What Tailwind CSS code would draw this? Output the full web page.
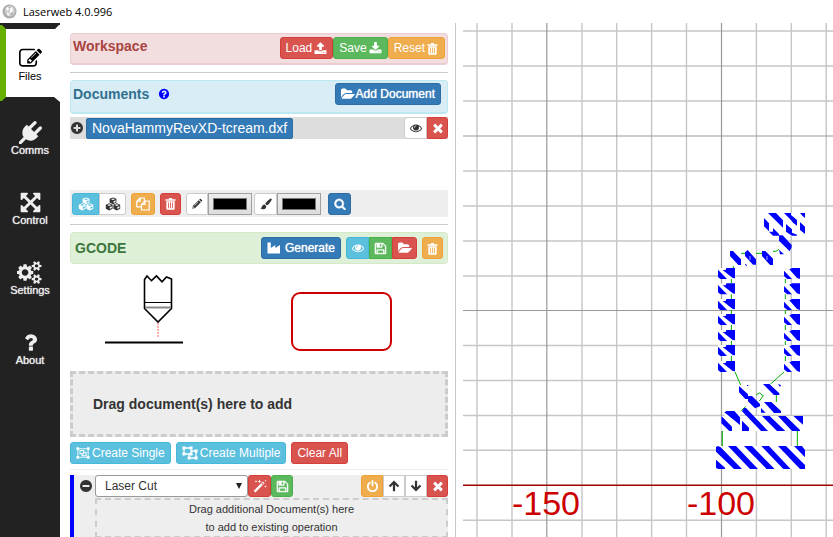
<!DOCTYPE html>
<html lang="en">
<head>
<meta charset="utf-8">
<meta name="viewport" content="width=device-width, initial-scale=1">
<title>Laserweb 4.0.996</title>
<script src="https://cdn.jsdelivr.net/npm/@tailwindcss/browser@4"></script>
</head>
<body class="flex h-screen flex-col overflow-hidden bg-white font-['Liberation_Sans',Arial,sans-serif] text-xs text-[#333]">

<svg class="hidden" aria-hidden="true">
  <symbol id="edit" viewBox="0 0 1792 1792"><path d="M888 1184l116-116-152-152-116 116v56h96v96h56zm440-720q-16-16-33 1l-350 350q-17 17-1 33t33-1l350-350q17-17 1-33zm80 594v190q0 119-84.5 203.5t-203.5 84.5h-832q-119 0-203.5-84.5t-84.5-203.5v-832q0-119 84.5-203.5t203.5-84.5h832q63 0 117 25 15 7 18 23 3 17-9 29l-49 49q-14 14-32 8-23-6-45-6h-832q-66 0-113 47t-47 113v832q0 66 47 113t113 47h832q66 0 113-47t47-113v-126q0-13 9-22l64-64q15-15 35-7t20 29zm-96-738l288 288-672 672h-288v-288zm444 132l-92 92-288-288 92-92q28-28 68-28t68 28l152 152q28 28 28 68t-28 68z"/></symbol>
  <symbol id="plug" viewBox="0 0 1792 1792"><path d="M1755 453q37 38 37 90.5t-37 90.5l-401 400 150 150-160 160q-163 163-389.5 186.5t-411.5-100.5l-362 362h-181v-181l362-362q-124-185-100.5-411.5t186.5-389.5l160-160 150 150 400-401q38-37 91-37t90 37 37 90.5-37 90.5l-400 401 234 234 401-400q38-37 91-37t90 37z"/></symbol>
  <symbol id="arrows" viewBox="0 0 1792 1792"><path d="M1411 541l-355 355 355 355 144-144q29-31 70-14 39 17 39 59v448q0 26-19 45t-45 19h-448q-42 0-59-40-17-39 14-69l144-144-355-355-355 355 144 144q31 30 14 69-17 40-59 40h-448q-26 0-45-19t-19-45v-448q0-42 40-59 39-17 69 14l144 144 355-355-355-355-144 144q-19 19-45 19-12 0-24-5-40-17-40-59v-448q0-26 19-45t45-19h448q42 0 59 40 17 39-14 69l-144 144 355 355 355-355-144-144q-31-30-14-69 17-40 59-40h448q26 0 45 19t19 45v448q0 42-39 59-13 5-25 5-26 0-45-19z"/></symbol>
  <symbol id="cogs" viewBox="0 0 1920 1792"><path d="M832 896q0-106-75-181t-181-75-181 75-75 181 75 181 181 75 181-75 75-181zm768 512q0-52-38-90t-90-38-90 38-38 90q0 53 37.5 90.5t90.5 37.5 90.5-37.5 37.5-90.5zm0-1024q0-52-38-90t-90-38-90 38-38 90q0 53 37.5 90.5t90.5 37.5 90.5-37.5 37.5-90.5zm-384 421v185q0 10-7 19.5t-16 10.5l-155 24q-11 35-32 76 34 48 90 115 7 11 7 20 0 12-7 19-23 30-82.5 89.5t-78.5 59.5q-11 0-21-7l-115-90q-37 19-77 31-11 108-23 155-7 24-30 24h-186q-11 0-20-7.5t-10-17.5l-23-153q-34-10-75-31l-118 89q-7 7-20 7-11 0-21-8-144-133-144-160 0-9 7-19 10-14 41-53t47-61q-23-44-35-82l-152-24q-10-1-17-9.500t-7-19.500v-185q0-10 7-19.500t16-10.500l155-24q11-35 32-76-34-48-90-115-7-11-7-20 0-12 7-20 22-30 82-89t79-59q11 0 21 7l115 90q34-18 77-32 11-108 23-154 7-24 30-24h186q11 0 20 7.500t10 17.500l23 153q34 10 75 31l118-89q8-7 20-7 11 0 21 8 144 133 144 160 0 8-7 19-12 16-42 54t-45 60q23 48 34 82l152 23q10 2 17 10.500t7 19.500zm640 533v140q0 16-149 31-12 27-30 52 51 113 51 138 0 4-4 7-122 71-124 71-8 0-46-47t-52-68q-20 2-30 2t-30-2q-14 21-52 68t-46 47q-2 0-124-71-4-3-4-7 0-25 51-138-18-25-30-52-149-15-149-31v-140q0-16 149-31 13-29 30-52-51-113-51-138 0-4 4-7 4-2 35-20t59-34 30-16q8 0 46 46.500t52 67.500q20-2 30-2t30 2q51-71 92-112l6-2q4 0 124 70 4 3 4 7 0 25-51 138 17 23 30 52 149 15 149 31zm0-1024v140q0 16-149 31-12 27-30 52 51 113 51 138 0 4-4 7-122 71-124 71-8 0-46-47t-52-68q-20 2-30 2t-30-2q-14 21-52 68t-46 47q-2 0-124-71-4-3-4-7 0-25 51-138-18-25-30-52-149-15-149-31v-140q0-16 149-31 13-29 30-52-51-113-51-138 0-4 4-7 4-2 35-20t59-34 30-16q8 0 46 46.500t52 67.500q20-2 30-2t30 2q51-71 92-112l6-2q4 0 124 70 4 3 4 7 0 25-51 138 17 23 30 52 149 15 149 31z"/></symbol>
  <symbol id="question" viewBox="0 0 1792 1792"><path d="M1088 1256v240q0 16-12 28t-28 12h-240q-16 0-28-12t-12-28v-240q0-16 12-28t28-12h240q16 0 28 12t12 28zm316-600q0 54-15.500 101t-35 76.500-55 59.500-57.500 43.500-61 35.500q-41 23-68.500 65t-27.500 67q0 17-12 32.500t-28 15.500h-240q-15 0-25.500-18.500t-10.500-37.500v-45q0-83 65-156.500t143-108.500q59-27 84-56t25-76q0-42-46.500-74t-107.500-32q-65 0-108 29-35 25-107 115-13 16-31 16-12 0-25-8l-164-125q-13-10-15.500-25t5.500-28q160-266 464-266 80 0 161 31t146 83 106 127.500 41 158.500z"/></symbol>
  <symbol id="help" viewBox="0 0 1792 1792"><path d="M1024 1376v-192q0-14-9-23t-23-9h-192q-14 0-23 9t-9 23v192q0 14 9 23t23 9h192q14 0 23-9t9-23zm256-672q0-88-55.500-163t-138.500-116-170-41q-243 0-371 213-15 24 8 42l132 100q7 6 19 6 16 0 25-12 53-68 86-92 34-24 86-24 48 0 85.500 26t37.500 59q0 38-20 61t-68 45q-63 28-115.500 86.500t-52.500 125.500v36q0 14 9 23t23 9h192q14 0 23-9t9-23q0-19 21.500-49.500t54.500-49.500q32-18 49-28.500t46-35 44.500-48 28-60.500 12.500-81zm384 192q0 209-103 385.500t-279.500 279.500-385.500 103-385.500-103-279.500-279.500-103-385.500 103-385.500 279.500-279.500 385.500-103 385.500 103 279.500 279.500 103 385.500z"/></symbol>
  <symbol id="upload" viewBox="0 0 1792 1792"><path d="M1344 1472q0-26-19-45t-45-19-45 19-19 45 19 45 45 19 45-19 19-45zm256 0q0-26-19-45t-45-19-45 19-19 45 19 45 45 19 45-19 19-45zm128-224v320q0 40-28 68t-68 28h-1472q-40 0-68-28t-28-68v-320q0-40 28-68t68-28h427q21 56 70.500 92t110.500 36h256q61 0 110.500-36t70.500-92h427q40 0 68 28t28 68zm-325-648q-17 40-59 40h-256v448q0 26-19 45t-45 19h-256q-26 0-45-19t-19-45v-448h-256q-42 0-59-40-17-39 14-69l448-448q18-19 45-19t45 19l448 448q31 30 14 69z"/></symbol>
  <symbol id="download" viewBox="0 0 1792 1792"><path d="M1344 1344q0-26-19-45t-45-19-45 19-19 45 19 45 45 19 45-19 19-45zm256 0q0-26-19-45t-45-19-45 19-19 45 19 45 45 19 45-19 19-45zm128-224v320q0 40-28 68t-68 28h-1472q-40 0-68-28t-28-68v-320q0-40 28-68t68-28h465l135 136q58 56 136 56t136-56l136-136h464q40 0 68 28t28 68zm-325-569q17 41-14 70l-448 448q-18 19-45 19t-45-19l-448-448q-31-29-14-70 17-39 59-39h256v-448q0-26 19-45t45-19h256q26 0 45 19t19 45v448h256q42 0 59 39z"/></symbol>
  <symbol id="trash" viewBox="0 0 14 14"><path fill-rule="evenodd" d="M1.500 2.500H5L5.500 1h3l.5 1.500h3.500V4h-11zM2.500 4.600h9v8q0 1-1 1h-7q-1 0-1-1zM4.500 6v6h.9V6zm2.100 0v6h.9V6zm2.100 0v6h.9V6z"/></symbol>
  <symbol id="folder" viewBox="0 0 1920 1792"><path d="M1879 952q0 31-31 66l-336 396q-43 51-120.500 86.500t-143.500 35.500h-1088q-34 0-60.500-13t-26.500-43q0-31 31-66l336-396q43-51 120.500-86.500t143.500-35.500h1088q34 0 60.500 13t26.500 43zm-343-344v160h-832q-94 0-197 47.500t-164 119.500l-337 396-5 6q0-4-.5-12.500t-.5-12.500v-960q0-92 66-158t158-66h320q92 0 158 66t66 158v32h544q92 0 158 66t66 158z"/></symbol>
  <symbol id="eye" viewBox="0 0 1792 1792"><path d="M1664 960q-152-236-381-353 61 104 61 225 0 185-131.500 316.500t-316.500 131.500-316.500-131.500-131.500-316.500q0-121 61-225-229 117-381 353 133 205 333.500 326.500t434.500 121.500 434.500-121.500 333.500-326.500zm-720-384q0-20-14-34t-34-14q-125 0-214.500 89.500t-89.500 214.500q0 20 14 34t34 14 34-14 14-34q0-86 61-147t147-61q20 0 34-14t14-34zm848 384q0 34-20 69-140 230-376.500 368.500t-499.500 138.500-499.500-139-376.500-368q-20-35-20-69t20-69q140-229 376.500-368t499.500-139 499.500 139 376.500 368q20 35 20 69z"/></symbol>
  <symbol id="times" viewBox="0 0 1792 1792"><path d="M1490 1322q0 40-28 68l-136 136q-28 28-68 28t-68-28l-294-294-294 294q-28 28-68 28t-68-28l-136-136q-28-28-28-68t28-68l294-294-294-294q-28-28-28-68t28-68l136-136q28-28 68-28t68 28l294 294 294-294q28-28 68-28t68 28l136 136q28 28 28 68t-28 68l-294 294 294 294q28 28 28 68z"/></symbol>
  <symbol id="plus" viewBox="0 0 1792 1792"><path d="M1344 960v-128q0-26-19-45t-45-19h-256v-256q0-26-19-45t-45-19h-128q-26 0-45 19t-19 45v256h-256q-26 0-45 19t-19 45v128q0 26 19 45t45 19h256v256q0 26 19 45t45 19h128q26 0 45-19t19-45v-256h256q26 0 45-19t19-45zm320-64q0 209-103 385.500t-279.500 279.500-385.500 103-385.500-103-279.500-279.500-103-385.500 103-385.500 279.500-279.500 385.500-103 385.500 103 279.500 279.500 103 385.500z"/></symbol>
  <symbol id="minus" viewBox="0 0 1792 1792"><path d="M1344 960v-128q0-26-19-45t-45-19h-768q-26 0-45 19t-19 45v128q0 26 19 45t45 19h768q26 0 45-19t19-45zm320-64q0 209-103 385.500t-279.500 279.500-385.500 103-385.500-103-279.500-279.500-103-385.500 103-385.500 279.500-279.500 385.500-103 385.500 103 279.500 279.500 103 385.500z"/></symbol>
  <symbol id="cubes" viewBox="0 0 16 14"><path fill-rule="evenodd" d="M8 .4l3.400 1.400v3.700L8 7.200 4.600 5.500V1.800zm0 1L5.900 2.200 8 3.100l2.100-.9zm.6 2.800v1.800l2-1V3.300zM4.200 6.300l3.400 1.400v4L4.200 13.400.8 11.700v-4zm0 1L2.100 8.100l2.100.9 2.100-.9zm.6 2.800v1.900l2-1V9.200zM11.800 6.300l3.400 1.400v4l-3.400 1.700-3.400-1.700v-4zm0 1-2.100.8 2.100.9 2.100-.9zm.6 2.800v1.900l2-1V9.200z"/></symbol>
  <symbol id="files" viewBox="0 0 14 14"><g fill="none" stroke="currentColor" stroke-width="1.200"><path d="M5.300 9.800H.8V4.200L4 1h4.300v3M4.200 1v3.200H.8"/><path d="M5.500 7.400 8.800 4h4.400v9H5.500zM9 4v3.400H5.500"/></g></symbol>
  <symbol id="pencil" viewBox="0 0 14 14"><path fill-rule="evenodd" d="M1.500 12.500l.8-3.400 6.600-6.600 2.600 2.600-6.600 6.600zM9.500 1.900l.8-.8q.6-.5 1.200 0l1.400 1.400q.5.600 0 1.200l-.8.800zM2.900 9.700l-.4 1.800 1.800-.4zM8.300 4.300 4 8.600l.4.400 4.300-4.300z"/></symbol>
  <symbol id="brush" viewBox="0 0 14 14"><path d="M13.300.9q.7.600.1 1.600Q11.600 5.700 9.300 8q-.8.700-1.500.5L6.300 7q-.3-.7.500-1.500Q9.200 2.700 11.900.9q.8-.5 1.400 0zM5.500 7.500 7.200 9.200q.3 2.700-1.700 3.700-2.600 1-5-.9 1.300-.1 1.700-1.700.7-2.800 3.300-2.800z"/></symbol>
  <symbol id="search" viewBox="0 0 1792 1792"><path d="M1216 832q0-185-131.500-316.500t-316.500-131.500-316.500 131.500-131.500 316.500 131.500 316.500 316.500 131.500 316.500-131.500 131.500-316.500zm512 832q0 52-38 90t-90 38q-54 0-90-38l-343-342q-179 124-399 124-143 0-273.500-55.500t-225-150-150-225-55.500-273.500 55.500-273.500 150-225 225-150 273.500-55.500 273.500 55.500 225 150 150 225 55.500 273.500q0 220-124 399l343 343q37 37 37 90z"/></symbol>
  <symbol id="industry" viewBox="0 0 14 14"><path d="M.5 1.500H3.800V7L8.300 4v3L13 4v8.500H.5z"/></symbol>
  <symbol id="floppy" viewBox="0 0 1792 1792"><path stroke="currentColor" stroke-width="60" d="M512 1536h768v-384h-768v384zm896 0h128v-896q0-14-10-38.500t-20-34.500l-281-281q-10-10-34-20t-39-10v416q0 40-28 68t-68 28h-576q-40 0-68-28t-28-68v-416h-128v1280h128v-416q0-40 28-68t68-28h832q40 0 68 28t28 68v416zm-384-928v-320q0-13-9.500-22.500t-22.500-9.500h-192q-13 0-22.500 9.500t-9.500 22.500v320q0 13 9.500 22.500t22.500 9.500h192q13 0 22.500-9.500t9.500-22.500zm640 32v928q0 40-28 68t-68 28h-1344q-40 0-68-28t-28-68v-1344q0-40 28-68t68-28h928q40 0 88 20t76 48l280 280q28 28 48 76t20 88z"/></symbol>
  <symbol id="power" viewBox="0 0 1792 1792"><path d="M1664 896q0 156-61 298t-164 245-245 164-298 61-298-61-245-164-164-245-61-298q0-182 80.500-343t226.500-270q43-32 95.500-25t83.500 50q32 42 24.500 94.500t-49.500 84.500q-98 74-151.500 181t-53.500 228q0 104 40.500 198.500t109.500 163.500 163.500 109.500 198.500 40.500 198.500-40.500 163.500-109.500 109.500-163.500 40.500-198.500q0-121-53.500-228t-151.500-181q-42-32-49.500-84.500t24.500-94.500q31-43 84-50t95 25q146 109 226.500 270t80.500 343zm-640-768v640q0 52-38 90t-90 38-90-38-38-90v-640q0-52 38-90t90-38 90 38 38 90z"/></symbol>
  <symbol id="magic" viewBox="0 0 14 14"><path fill-rule="evenodd" d="M.7 11.800 9.900 2.600l1.700 1.700-9.200 9.200zM8.500 5.100l.8.800 1.200-1.300-.7-.8zM3 .8l.4 1.100 1.100.4-1.100.4L3 3.800l-.4-1.100-1.100-.4 1.100-.4zM6.500.3 7 1.900l1.600.5L7 2.900l-.5 1.600L6 2.900l-1.600-.5L6 1.900zM12.500.6l.3.900.9.300-.9.300-.3.900-.3-.9-.9-.3.900-.3zM12.500 6l.3 1.100 1.100.3-1.100.4-.3 1.100-.4-1.100-1-.4 1-.3z"/></symbol>
  <symbol id="up" viewBox="0 0 14 14"><path fill="none" stroke="currentColor" stroke-width="2.600" d="M7 13V2.500M1.800 7.500 7 2.300l5.200 5.200"/></symbol>
  <symbol id="down" viewBox="0 0 14 14"><path fill="none" stroke="currentColor" stroke-width="2.600" d="M7 1v10.500M1.800 6.500 7 11.700l5.200-5.200"/></symbol>
  <symbol id="group" viewBox="0 0 16 14"><g fill="none" stroke="currentColor"><path d="M2 2h12v10H2z"/><path stroke-width="1.200" d="M4.500 4.200h4.300v3.600H4.500zM9 6.200h2.600v3.900H7V8"/></g><path d="M.4.400h3v3h-3zM12.600.4h3v3h-3zM.4 10.600h3v3h-3zM12.600 10.600h3v3h-3z"/></symbol>
  <symbol id="ungroup" viewBox="0 0 16 14"><path fill="none" stroke="currentColor" stroke-width="1.300" d="M2 2h7v6H2zM9 5h5v7H7V8"/><path d="M.4.400h3v3h-3zM7.600.400h3v3h-3zM.4 6.600h3v3h-3zM7.600 6.600h3v3h-3zM12.600 3.600h3v3h-3zM12.600 10.600h3v3h-3zM5.600 10.600h3v3h-3z"/></symbol>
</svg>

<header class="flex h-[23px] shrink-0 items-center gap-[6px] pl-[2px] font-['Open_Sans','Noto_Sans',sans-serif] text-[11px] leading-4 text-black">
  <svg class="size-[15px]" viewBox="0 0 15 15" aria-hidden="true"><circle cx="7.500" cy="7.500" r="7" fill="#aaa"/><circle cx="8" cy="7" r="5.400" fill="#ccc"/><path d="M4 4l2-1 1 2-2 2zM8 5l2-2 1 4-3 2z" fill="#fff"/><path d="M5 8l3 1-1 3-2-1z" fill="#eee"/><path d="M9 10l2-1-1 2zM7 3l1 1H7z" fill="#888"/></svg>
  <h1>Laserweb 4.0.996</h1>
</header>

<div class="flex min-h-0 flex-1">
  <nav class="w-[60px] shrink-0 bg-[#222] pt-1 text-[11px] text-[#eee]" aria-label="Sections">
    <a href="#files" class="relative flex h-[70px] flex-col items-center pt-5 text-black">
      <svg class="absolute -top-[2px] left-0 h-[78px] w-full" viewBox="0 0 60 78" preserveAspectRatio="none" aria-hidden="true"><path fill="#fff" d="M6 4h49l5-5v78l-6-5H6z"/><path fill="#67b000" d="M0 0h2l4 4v68l-4 4H0z"/></svg>
      <svg class="relative size-[23px]" fill="currentColor" aria-hidden="true"><use href="#edit"/></svg>
      <span class="relative leading-3">Files</span>
    </a>
    <a href="#comms" class="flex h-[70px] flex-col items-center pt-6 text-shadow-[0_0_1px_#eee]"><svg class="size-[23px]" fill="currentColor" aria-hidden="true"><use href="#plug"/></svg><span class="leading-3">Comms</span></a>
    <a href="#control" class="flex h-[70px] flex-col items-center pt-6 text-shadow-[0_0_1px_#eee]"><svg class="size-[23px]" fill="currentColor" aria-hidden="true"><use href="#arrows"/></svg><span class="leading-3">Control</span></a>
    <a href="#settings" class="flex h-[70px] flex-col items-center pt-6 text-shadow-[0_0_1px_#eee]"><svg class="h-[23px] w-[26px]" fill="currentColor" aria-hidden="true"><use href="#cogs"/></svg><span class="leading-3">Settings</span></a>
    <a href="#about" class="flex h-[70px] flex-col items-center pt-6 text-shadow-[0_0_1px_#eee]"><svg class="size-[23px]" fill="currentColor" aria-hidden="true"><use href="#question"/></svg><span class="leading-3">About</span></a>
  </nav>

  <main class="w-[396px] shrink-0 overflow-hidden border-r border-[#c8c8c8] pt-[10px] pr-[7px] pl-[10px]">
    <section class="flex h-8 items-start justify-between rounded border border-b-2 border-[#ebccd1] bg-[#f2dede] pt-[3px] pr-[2px] pl-[2px]">
      <h2 class="text-sm leading-[18px] font-bold text-[#a94442]">Workspace</h2>
      <div class="flex text-white text-shadow-[0_0_1px_#fff]">
        <button class="flex h-[22px] items-center gap-[2px] rounded-[3px] border border-[#d43f3a] bg-[#d9534f] px-[5px]">Load<svg class="size-[13px]" fill="currentColor"><use href="#upload"/></svg></button>
        <button class="flex h-[22px] items-center gap-[2px] rounded-[3px] border border-[#4cae4c] bg-[#5cb85c] px-[5px]">Save<svg class="size-[13px]" fill="currentColor"><use href="#download"/></svg></button>
        <button class="flex h-[22px] items-center gap-px rounded-[3px] border border-[#eea236] bg-[#f0ad4e] px-[5px]">Reset<svg class="size-[13px]" fill="currentColor"><use href="#trash"/></svg></button>
      </div>
    </section>
    <hr class="my-[7px] border-[#ccc]">
    <section class="flex h-[34px] items-start justify-between rounded border border-b-2 border-[#bce8f1] bg-[#d9edf7] pt-[2px] pr-[6px] pl-[2px]">
      <h2 class="flex items-center gap-[9px] pt-[2px] text-sm leading-[18px] font-bold text-[#31708f]">Documents<svg class="size-3" fill="#00f" role="img" aria-label="Help"><use href="#help"/></svg></h2>
      <button class="flex h-[22px] items-center gap-px rounded-[3px] border border-[#2e6da4] bg-[#337ab7] px-[5px] text-white text-shadow-[0_0_1px_#fff]"><svg class="size-[14px]" fill="currentColor"><use href="#folder"/></svg>Add Document</button>
    </section>
    <div class="mt-[3px] flex h-[22px] items-center bg-[#ddd]">
      <button aria-label="Expand document"><svg class="size-[14px]" fill="currentColor"><use href="#plus"/></svg></button>
      <button class="ml-[2px] h-[21px] rounded-[2px] border border-[#2e6da4] bg-[#337ab7] px-[5px] text-sm leading-[18px] text-white">NovaHammyRevXD-tcream.dxf</button>
      <button class="ml-auto flex h-[22px] w-[23px] items-center justify-center rounded-l-[3px] border border-[#ccc] bg-white" aria-label="Toggle visibility"><svg class="size-3" fill="currentColor"><use href="#eye"/></svg></button>
      <button class="flex h-[22px] w-[21px] items-center justify-center rounded-r-[3px] border border-[#d43f3a] bg-[#d9534f] text-white" aria-label="Remove document"><svg class="size-[14px]" fill="currentColor"><use href="#times"/></svg></button>
    </div>
    <div class="mt-[51px] flex h-[27px] items-center bg-[#eee] pl-[2px]">
      <button class="flex h-[22px] w-[27px] items-center justify-center rounded-l-[3px] border border-[#46b8da] bg-[#5bc0de] text-white" aria-label="Select all"><svg class="h-[14px] w-4" fill="currentColor"><use href="#cubes"/></svg></button>
      <button class="flex h-[22px] w-[27px] items-center justify-center rounded-r-[3px] border border-[#ccc] bg-white" aria-label="Select none"><svg class="h-[14px] w-4" fill="currentColor"><use href="#cubes"/></svg></button>
      <button class="ml-[5px] flex h-[22px] w-6 items-center justify-center rounded-[3px] border border-[#eea236] bg-[#f0ad4e] text-white" aria-label="Clone"><svg class="size-[14px]" fill="currentColor"><use href="#files"/></svg></button>
      <button class="ml-[5px] flex h-[22px] w-[21px] items-center justify-center rounded-[3px] border border-[#d43f3a] bg-[#d9534f] text-white" aria-label="Delete"><svg class="size-[13px]" fill="currentColor"><use href="#trash"/></svg></button>
      <label for="stroke" class="ml-[5px] flex h-[22px] w-[22px] items-center justify-center rounded-l-[3px] border border-[#ccc] bg-white" aria-label="Stroke colour"><svg class="size-3" fill="currentColor"><use href="#pencil"/></svg></label>
      <input id="stroke" type="color" value="#000000" class="h-[22px] w-11 border border-[#a0a0a0] bg-linear-to-b from-[#eee] to-[#ddd] [&::-webkit-color-swatch]:border-[#777] [&::-webkit-color-swatch-wrapper]:px-1 [&::-webkit-color-swatch-wrapper]:py-1">
      <label for="fill" class="ml-[2px] flex h-[22px] w-[23px] items-center justify-center rounded-l-[3px] border border-[#ccc] bg-white" aria-label="Fill colour"><svg class="size-3" fill="currentColor"><use href="#brush"/></svg></label>
      <input id="fill" type="color" value="#000000" class="h-[22px] w-11 border border-[#a0a0a0] bg-linear-to-b from-[#eee] to-[#ddd] [&::-webkit-color-swatch]:border-[#777] [&::-webkit-color-swatch-wrapper]:px-1 [&::-webkit-color-swatch-wrapper]:py-1">
      <button class="ml-[7px] flex h-[22px] w-[23px] items-center justify-center rounded-[3px] border border-[#2e6da4] bg-[#337ab7] text-white" aria-label="Search"><svg class="size-3" fill="currentColor" stroke="currentColor" stroke-width="60"><use href="#search"/></svg></button>
    </div>
    <hr class="my-[7px] border-[#ccc]">
    <section class="flex h-8 items-center rounded border border-[#d6e9c6] bg-[#dff0d8] pr-1 pl-1 text-white">
      <h2 class="mr-auto text-sm font-bold text-[#3c763d]">GCODE</h2>
      <button class="flex h-[22px] items-center gap-1 rounded-[3px] border border-[#2e6da4] bg-[#337ab7] px-[5px] text-shadow-[0_0_1px_#fff]"><svg class="size-[14px]" fill="currentColor"><use href="#industry"/></svg>Generate</button>
      <button class="ml-[5px] flex h-[22px] w-[23px] items-center justify-center rounded-l-[3px] border border-[#46b8da] bg-[#5bc0de]" aria-label="View G-code"><svg class="size-3" fill="currentColor"><use href="#eye"/></svg></button>
      <button class="flex h-[22px] w-[23px] items-center justify-center border border-[#4cae4c] bg-[#5cb85c]" aria-label="Save G-code"><svg class="size-[13px]" fill="currentColor"><use href="#floppy"/></svg></button>
      <button class="flex h-[22px] w-[25px] items-center justify-center rounded-r-[3px] border border-[#d43f3a] bg-[#d9534f]" aria-label="Open G-code"><svg class="size-[14px]" fill="currentColor"><use href="#folder"/></svg></button>
      <button class="ml-[5px] flex h-[22px] w-[21px] items-center justify-center rounded-[3px] border border-[#eea236] bg-[#f0ad4e]" aria-label="Clear G-code"><svg class="size-[13px]" fill="currentColor"><use href="#trash"/></svg></button>
    </section>
    <div class="grid h-[107px] grid-cols-2 pt-[10px]">
      <svg class="ml-[35px] h-[72px] w-[78px]" viewBox="0 0 78 72" fill="none" stroke="#000" role="img" aria-label="Laser head"><path stroke-width="1.600" d="M39.500 5.500 42 2l4.500 4.700L51.500 2l5.500 5.800L61.500 3l5 2v29.500L53 48 39.500 34.500z"/><path d="M39.500 28.500h27"/><path stroke="#888" stroke-width="2" d="M40 33.500h26"/><path stroke="#f99" stroke-width="1.600" stroke-dasharray="2 1" d="M53 49v14"/><path stroke-width="2" d="M0 68.500h78"/></svg>
      <div class="mt-[18px] ml-8 h-[59px] w-[101px] rounded-[9px] border-2 border-[#c00]"></div>
    </div>
    <div class="flex h-[66px] items-center border-3 border-dashed border-[#ccc] bg-[#ededed] pl-5 text-sm font-bold">Drag document(s) here to add</div>
    <div class="mt-[5px] flex gap-[5px] text-white text-shadow-[0_0_1px_#fff]">
      <button class="flex h-[22px] items-center gap-[2px] rounded-[3px] border border-[#46b8da] bg-[#5bc0de] px-[5px]"><svg class="h-3 w-[14px]" fill="currentColor"><use href="#group"/></svg>Create Single</button>
      <button class="flex h-[22px] items-center gap-[2px] rounded-[3px] border border-[#46b8da] bg-[#5bc0de] px-[5px]"><svg class="h-[14px] w-4" fill="currentColor"><use href="#ungroup"/></svg>Create Multiple</button>
      <button class="h-[22px] rounded-[3px] border border-[#d43f3a] bg-[#d9534f] px-[5px]">Clear All</button>
    </div>
    <hr class="my-[5px] border-[#eee]">
    <section class="border-l-4 border-[#00f] bg-[#eee] pl-[5px]">
      <div class="flex items-center">
        <button class="w-4" aria-label="Collapse operation"><svg class="size-[14px]" fill="currentColor"><use href="#minus"/></svg></button>
        <div class="relative flex">
          <select aria-label="Operation type" class="h-[22px] w-[153px] appearance-none rounded-[3px] border border-[#999] bg-white pl-[9px] text-xs text-[#333]"><option>Laser Cut</option></select>
          <svg class="pointer-events-none absolute top-2 right-[6px] size-[6px]" viewBox="0 0 6 6" aria-hidden="true"><path fill="#222" d="M0 0h6L3 6z"/></svg>
        </div>
        <button class="flex h-[22px] w-[23px] items-center justify-center rounded-[3px] border border-[#d43f3a] bg-[#d9534f] text-white" aria-label="Presets"><svg class="size-[14px]" fill="currentColor"><use href="#magic"/></svg></button>
        <button class="flex h-[22px] w-[22px] items-center justify-center rounded-[3px] border border-[#4cae4c] bg-[#5cb85c] text-white" aria-label="Save preset"><svg class="size-[13px]" fill="currentColor"><use href="#floppy"/></svg></button>
        <button class="ml-auto flex h-[22px] w-[22px] items-center justify-center rounded-l-[3px] border border-[#eea236] bg-[#f0ad4e] text-white" aria-label="Enable"><svg class="size-[13px]" fill="currentColor"><use href="#power"/></svg></button>
        <button class="flex h-[22px] w-[22px] items-center justify-center border border-[#ccc] bg-white" aria-label="Move up"><svg class="size-3" fill="currentColor"><use href="#up"/></svg></button>
        <button class="flex h-[22px] w-[22px] items-center justify-center border border-[#ccc] bg-white" aria-label="Move down"><svg class="size-3" fill="currentColor"><use href="#down"/></svg></button>
        <button class="flex h-[22px] w-[21px] items-center justify-center rounded-r-[3px] border border-[#d43f3a] bg-[#d9534f] text-white" aria-label="Remove operation"><svg class="size-[14px]" fill="currentColor"><use href="#times"/></svg></button>
      </div>
      <div class="mt-px ml-4 border-2 border-dashed border-[#ccc] text-center text-[11px] leading-[18px]">Drag additional Document(s) here<br>to add to existing operation</div>
    </section>
  </main>

  <div class="min-w-0 flex-1">
    <svg class="size-full" viewBox="456 23 377 514" preserveAspectRatio="xMinYMin slice" role="img" aria-label="Work area">
      <defs>
        <g id="l"><path fill="#fff" d="M54 0h51v33H54z"/><path fill="#00f" d="M54 5l27 28H61l-7-6zM68 6h9l2-6h26v31l-7-1z"/></g>
        <g id="r"><path fill="#fff" d="M252 0h48v33h-48z"/><path fill="#00f" d="M252 8l24 25h-14l-10-8zM268 4l8-4h24v33l-9-3z"/></g>
      </defs>
      <path stroke="#c6c6c6" stroke-width="1.400" d="M477 23v514M512 23v514M582 23v514M616.700 23v514M651.600 23v514M686.500 23v514M756.400 23v514M791.300 23v514M826.200 23v514M463 31h370M463 66h370M463 101h370M463 171h370M463 206h370M463 241h370M463 276h370M463 345.500h370M463 380.500h370M463 415.500h370M463 450.300h370M463 520.300h370"/>
      <path stroke="#999" stroke-width="1.200" d="M546.800 23v514M721.500 23v514M463 136h370M463 310.500h370"/>
      <path stroke="#a00000" stroke-width="1.400" d="M463 485.300h370"/>
      <g fill="#c00" class="font-['Liberation_Sans',Arial,sans-serif] text-[34px]" text-anchor="middle"><text x="546" y="515">-150</text><text x="721" y="515">-100</text></g>
      <g transform="translate(700 200) scale(.33333)">
        <path fill="#fff" d="M192 39h123v68H192zM90 153h33v42H90zM135 150h33v44h-33zM186 153h33v42h-33zM64 648h245v45H64zM48 738h267v69H48zM73 633h47v15H73z"/>
        <use href="#l" y="204"/><use href="#l" y="250"/><use href="#l" y="297"/><use href="#l" y="342"/><use href="#l" y="390"/><use href="#l" y="435"/><use href="#l" y="483"/>
        <use href="#r" y="204"/><use href="#r" y="250"/><use href="#r" y="297"/><use href="#r" y="342"/><use href="#r" y="390"/><use href="#r" y="435"/><use href="#r" y="483"/>
        <path fill="none" stroke="#00b000" stroke-width="3" d="M123 160h15M168 160h18M219 154h9l9-6M100 198v6M94 237v13M94 283v14M94 330v12M94 375v15M94 423v12M94 468v15M256 237v13M256 283v14M256 330v12M256 375v15M256 423v12M256 468v15M105 516l17 39M252 516l-40 36M229 585v21M122 633l15-13M67 693v45M292 693v45M168 585l10-6 12 8-12 16"/>
        <path fill="#00f" d="M192 54l15 16v24l-15-15zM204 39h24l21 22v22zM252 39h21v6l18 15v17l-11-8-10-12zM300 39h15v15l-7-6zM258 72l18 16v10l15 6v3h-15l-18-12zM300 66l15 14v22l-15-12zM207 95h12V84l18 18v5h-18zM237 106h11l27 29v7l-6 12-32-32zM237 149l15 14h-12zM90 153h9l24 25v17h-8l-25-27zM135 157l8-7 25 28v16h-9l-24-26zM186 153h10l23 23v19h-9l-24-27zM135 192h3l3 6h-3z"/>
        <path stroke="#fff" stroke-width="2" d="M150 168v12M201 168v12"/>
        <path fill="#00f" d="M117 558l27 25v14h-8l-19-20zM144 588h12l24 24v7l-15 6-21-21zM189 552h19l30 28v5h-16zM234 552l9 3-3 6zM192 606h22l29 27v6h-21zM183 624l14 14h-14zM126 634l6-10h6l66 69h-21zM186 648h23l47 45h-25zM234 648h23l43 42v3h-24zM280 648h29v26zM64 648l32 32v13h-8l-24-23zM73 637l7-4h23l17 19v23zM126 662l21 21v10h-21zM141 555h4v3h-4z"/>
        <path fill="#00f" d="M48 741l6-3 8 4 64 65h-24l-54-52zM84 738h24l66 69h-24zM132 738h24l68 69h-24zM184 738h23l65 69h-22zM234 738h24l57 57v12h-15zM282 738h24l9 12v22zM48 779l27 24v4H54l-6-4z"/>
      </g>
    </svg>
  </div>
</div>
</body>
</html>
